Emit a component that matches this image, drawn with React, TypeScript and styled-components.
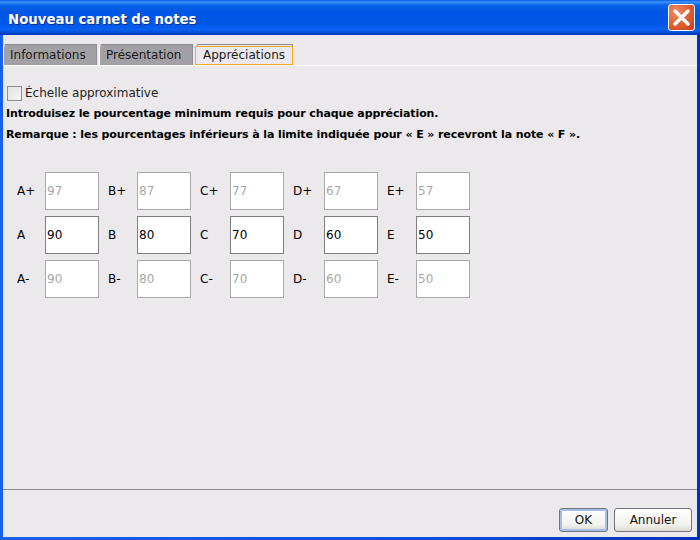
import React from 'react';
import styled, { createGlobalStyle } from 'styled-components';

const GlobalStyle = createGlobalStyle`
  html, body {
    margin: 0;
    padding: 0;
    background: #ece9ec;
  }
`;

const Frame = styled.div`
  width: 700px;
  height: 540px;
  box-sizing: border-box;
  display: flex;
  flex-direction: column;
  overflow: hidden;
  font-family: 'DejaVu Sans', sans-serif;
  font-size: 12px;
  color: #000;
  background: linear-gradient(to right, #1a5ff0 0, #0a4fe0 60%, #0331b8 100%);
`;

const TitleBar = styled.div`
  height: 35px;
  flex: none;
  box-sizing: border-box;
  display: flex;
  align-items: center;
  justify-content: space-between;
  padding: 4px 5px 0 8px;
  background: linear-gradient(
    to bottom,
    #0a58e0 0,
    #3d95ff 2px,
    #0a63ea 5px,
    #0056e4 12px,
    #0058e8 24px,
    #0a60f0 30px,
    #0048cc 33px,
    #0039b0 35px
  );
`;

const Title = styled.span`
  color: #fff;
  font-weight: bold;
  font-size: 13.3px;
  text-shadow: 1px 1px 0 #0a2c8c;
`;

const CloseButton = styled.div`
  width: 27px;
  height: 27px;
  margin-top: -4px;
  box-sizing: border-box;
  border: 1px solid #fff;
  border-radius: 3px;
  display: flex;
  align-items: center;
  justify-content: center;
  background: radial-gradient(circle at 30% 30%, #ef8a63, #dc5a2e 60%, #c23c14);
`;

const Body = styled.div`
  flex: 1;
  display: flex;
  flex-direction: column;
  margin: 0 3px 3px;
  background: #ece9ec;
`;

const TabStrip = styled.div`
  display: flex;
  gap: 2px;
  height: 22px;
  margin-top: 9px;
  box-sizing: border-box;
  border-bottom: 1px solid #fff;
`;

const Tab = styled.div<{ $active?: boolean; $width: number }>`
  position: relative;
  box-sizing: border-box;
  height: 21px;
  width: ${(p) => p.$width}px;
  padding-left: ${(p) => (p.$active ? 7 : 6)}px;
  display: flex;
  align-items: center;
  color: #1a1a1a;
  background: ${(p) => (p.$active ? '#ece9ec' : '#a2a2a6')};
  border-top: 1px solid #8c8c90;
  border-right: 1px solid #8c8c90;
  border-left: 1px solid ${(p) => (p.$active ? '#ece9ec' : '#fff')};
  border-top-left-radius: 4px;

  ${(p) =>
    p.$active &&
    `
    &::after {
      content: '';
      position: absolute;
      left: -1px;
      right: -1px;
      top: 1px;
      bottom: 0;
      border: 1px solid #f4a81c;
      border-top-left-radius: 2px;
    }
  `}
`;

const Content = styled.div`
  flex: 1;
  padding: 17px 0 0 3px;
`;

const CheckRow = styled.label`
  display: flex;
  align-items: center;
  gap: 3px;
  height: 20px;
  color: #222;
`;

const CheckBox = styled.span`
  width: 15px;
  height: 15px;
  margin-left: 1px;
  box-sizing: border-box;
  border: 1px solid #8e8e92;
  background: linear-gradient(135deg, #e2e0e2, #f6f6f6);
`;

const Note = styled.p`
  margin: 0;
  height: 21px;
  line-height: 21px;
  font-size: 11px;
  letter-spacing: -0.1px;
  font-weight: bold;
`;

const GradeGrid = styled.div`
  display: grid;
  grid-template-columns: 19px 54px 20px 54px 21px 54px 22px 54px 20px 54px;
  grid-auto-rows: 38px;
  column-gap: 9px;
  row-gap: 6px;
  margin: 27px 0 0 11px;
`;

const GradeLabel = styled.span`
  display: flex;
  align-items: center;
  white-space: nowrap;
`;

const GradeInput = styled.div<{ $enabled?: boolean }>`
  box-sizing: border-box;
  border: 1px solid ${(p) => (p.$enabled ? '#7f7f82' : '#a9a9ad')};
  background: #fff;
  color: ${(p) => (p.$enabled ? '#000' : '#a8a8a8')};
  padding-left: 1px;
  display: flex;
  align-items: center;
`;

const Footer = styled.div`
  height: 48px;
  flex: none;
  box-sizing: border-box;
  border-top: 1px solid #8c8c90;
  display: flex;
  justify-content: flex-end;
  align-items: flex-start;
  gap: 6px;
  padding: 18px 5px 0 0;
`;

const Button = styled.div<{ $default?: boolean; $width: number }>`
  width: ${(p) => p.$width}px;
  height: 24px;
  box-sizing: border-box;
  border: 1px solid #74747c;
  border-radius: 3px;
  display: flex;
  align-items: center;
  justify-content: center;
  color: #111;
  background: linear-gradient(to bottom, #fff, #f2f2ee 70%, #dcdad4);
  box-shadow: ${(p) => (p.$default ? 'inset 0 0 0 2px #a8bee6' : 'none')};
`;

const rows = [
  { suffix: '+', values: [97, 87, 77, 67, 57], enabled: false },
  { suffix: '', values: [90, 80, 70, 60, 50], enabled: true },
  { suffix: '-', values: [90, 80, 70, 60, 50], enabled: false },
];
const letters = ['A', 'B', 'C', 'D', 'E'];

const App = () => {
  return (
    <>
      <GlobalStyle />
      <Frame>
        <TitleBar>
          <Title>Nouveau carnet de notes</Title>
          <CloseButton>
            <svg width="19" height="19" viewBox="0 0 19 19">
              <path d="M3 3 L16 16 M16 3 L3 16" stroke="#fff" strokeWidth="3.4" strokeLinecap="round" />
            </svg>
          </CloseButton>
        </TitleBar>
        <Body>
          <TabStrip>
            <Tab $width={94}>Informations</Tab>
            <Tab $width={94}>Présentation</Tab>
            <Tab $active $width={98}>Appréciations</Tab>
          </TabStrip>
          <Content>
            <CheckRow>
              <CheckBox />
              Échelle approximative
            </CheckRow>
            <Note>Introduisez le pourcentage minimum requis pour chaque appréciation.</Note>
            <Note>Remarque : les pourcentages inférieurs à la limite indiquée pour « E » recevront la note « F ».</Note>
            <GradeGrid>
              {rows.map((row) =>
                row.values.map((value, i) => (
                  <React.Fragment key={letters[i] + row.suffix}>
                    <GradeLabel>{letters[i] + row.suffix}</GradeLabel>
                    <GradeInput $enabled={row.enabled}>{value}</GradeInput>
                  </React.Fragment>
                ))
              )}
            </GradeGrid>
          </Content>
          <Footer>
            <Button $default $width={49}>OK</Button>
            <Button $width={78}>Annuler</Button>
          </Footer>
        </Body>
      </Frame>
    </>
  );
};

export default App;
